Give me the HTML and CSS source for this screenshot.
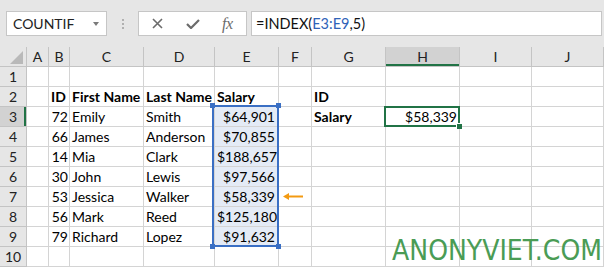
FILE: index.html
```html
<!DOCTYPE html>
<html>
<head>
<meta charset="utf-8">
<link rel="stylesheet" href="styles.css">
</head>
<body>
<div class="app">
  <div class="toolbar">
    <div class="namebox"><span>COUNTIF</span><span class="nb-caret"></span></div>
    <div class="grip"><i></i><i></i><i></i></div>
    <div class="fbtns">
      <svg class="ic-x" width="11" height="11" viewBox="0 0 11 11"><path d="M1 1L10 10M10 1L1 10" stroke="#6b6b6b" stroke-width="1.6" fill="none"/></svg>
      <svg class="ic-ok" width="14" height="10" viewBox="0 0 14 10"><path d="M1 5L5 9L13 1" stroke="#6b6b6b" stroke-width="2.2" fill="none"/></svg>
      <span class="fx">fx</span>
    </div>
    <div class="formula">=INDEX(<span class="ref">E3:E9</span>,5)</div>
  </div>
  <div class="sheet">
    <div class="c hd corner"><svg width="13" height="13" viewBox="0 0 13 13"><polygon points="13,0 13,13 0,13" fill="#b9b9b9"/></svg></div>
    <div class="c hd">A</div><div class="c hd">B</div><div class="c hd">C</div><div class="c hd">D</div><div class="c hd">E</div><div class="c hd">F</div><div class="c hd">G</div><div class="c hd hd-act">H</div><div class="c hd">I</div><div class="c hd">J</div>

    <div class="c hd rh">1</div><div class="c"></div><div class="c"></div><div class="c"></div><div class="c"></div><div class="c"></div><div class="c"></div><div class="c"></div><div class="c"></div><div class="c"></div><div class="c"></div>

    <div class="c hd rh">2</div><div class="c"></div><div class="c b idc">ID</div><div class="c b">First Name</div><div class="c b">Last Name</div><div class="c b">Salary</div><div class="c"></div><div class="c b">ID</div><div class="c"></div><div class="c"></div><div class="c"></div>

    <div class="c hd rh rh-act">3</div><div class="c"></div><div class="c r idc">72</div><div class="c">Emily</div><div class="c">Smith</div><div class="c r sel anchor">$64,901<div class="selbox"><i class="h tl"></i><i class="h tr"></i><i class="h bl"></i><i class="h br"></i></div></div><div class="c"></div><div class="c b">Salary</div><div class="c r anchor">$58,339<div class="actbox"><i class="fill"></i></div></div><div class="c"></div><div class="c"></div>

    <div class="c hd rh">4</div><div class="c"></div><div class="c r idc">66</div><div class="c">James</div><div class="c">Anderson</div><div class="c r sel">$70,855</div><div class="c"></div><div class="c"></div><div class="c"></div><div class="c"></div><div class="c"></div>

    <div class="c hd rh">5</div><div class="c"></div><div class="c r idc">14</div><div class="c">Mia</div><div class="c">Clark</div><div class="c r sel">$188,657</div><div class="c"></div><div class="c"></div><div class="c"></div><div class="c"></div><div class="c"></div>

    <div class="c hd rh">6</div><div class="c"></div><div class="c r idc">30</div><div class="c">John</div><div class="c">Lewis</div><div class="c r sel">$97,566</div><div class="c"></div><div class="c"></div><div class="c"></div><div class="c"></div><div class="c"></div>

    <div class="c hd rh">7</div><div class="c"></div><div class="c r idc">53</div><div class="c">Jessica</div><div class="c">Walker</div><div class="c r sel">$58,339</div><div class="c arrowc"><svg width="20" height="7" viewBox="0 0 20 7"><path d="M4 3.5H20" stroke="#f39a12" stroke-width="2"/><polygon points="0,3.5 6,0 6,7" fill="#f39a12"/></svg></div><div class="c"></div><div class="c"></div><div class="c"></div><div class="c"></div>

    <div class="c hd rh">8</div><div class="c"></div><div class="c r idc">56</div><div class="c">Mark</div><div class="c">Reed</div><div class="c r sel">$125,180</div><div class="c"></div><div class="c"></div><div class="c"></div><div class="c"></div><div class="c"></div>

    <div class="c hd rh">9</div><div class="c"></div><div class="c r idc">79</div><div class="c">Richard</div><div class="c">Lopez</div><div class="c r sel">$91,632</div><div class="c"></div><div class="c"></div><div class="c"></div><div class="c"></div><div class="c"></div>

    <div class="c hd rh">10</div><div class="c"></div><div class="c"></div><div class="c"></div><div class="c"></div><div class="c"></div><div class="c"></div><div class="c"></div><div class="c"></div><div class="c"></div><div class="c"></div>
  </div>
  <div class="watermark">ANONYVIET.COM</div>
</div>
</body>
</html>
```
FILE: styles.css
```css
* { box-sizing: border-box; margin: 0; padding: 0; }
html, body { width: 604px; height: 267px; overflow: hidden; }
body { background: #e6e6e6; font-family: Lato, "Open Sans", sans-serif; color: #000; }
.app { position: relative; width: 604px; height: 267px; overflow: hidden; }

.toolbar { height: 47px; display: flex; align-items: flex-start; padding: 11px 2px 0 6px; }
.namebox { width: 101px; height: 25px; background: #fff; border: 1px solid #c6c6c6; display: flex; align-items: center; justify-content: space-between; padding: 0 7px 0 6px; font-size: 14px; color: #222; }
.nb-caret { width: 0; height: 0; border-left: 3.5px solid transparent; border-right: 3.5px solid transparent; border-top: 4px solid #7a7a7a; }
.grip { display: flex; flex-direction: column; gap: 2px; margin: 8px 0 0 15px; }
.grip i { display: block; width: 2px; height: 2px; background: #b0b0b0; }
.fbtns { margin-left: 14px; width: 109px; height: 25px; background: #fff; border: 1px solid #c6c6c6; display: flex; align-items: center; padding-left: 13px; }
.ic-ok { margin-left: 23px; }
.fx { margin-left: 22px; font-family: "Liberation Serif", serif; font-style: italic; font-size: 16px; color: #6b6b6b; letter-spacing: -0.5px; }
.formula { margin-left: 4px; flex: 1; height: 25px; background: #fff; border: 1px solid #c6c6c6; font-size: 14.5px; padding-left: 4px; line-height: 23px; color: #111; }
.ref { color: #2f63b8; }

.sheet { display: grid; grid-template-columns: 27px 22px 21px 74px 71px 64px 33px 74px 74px 72px 72px; grid-auto-rows: 20px; background: #fff; }
.c { border-right: 1px solid #d4d4d4; border-bottom: 1px solid #d4d4d4; font-size: 14px; line-height: 19px; padding: 0 2px; white-space: nowrap; }
.hd { background: #e6e6e6; border-color: #c4c4c4; text-align: center; color: #222; padding-top: 1px; line-height: 18px; }
.rh { padding-top: 0; line-height: 19px; }
.corner { display: flex; align-items: flex-end; justify-content: flex-end; padding: 0 3px 2px 0; }
.hd-act { background: #d2d2d2; box-shadow: inset 0 -2px 0 #217346; }
.rh-act { background: #d2d2d2; box-shadow: inset -2px 0 0 #217346; }
.b { font-weight: 700; }
.r { text-align: right; }
.idc { padding-right: 1px; }
.sel { background: #e4ebf6; padding-right: 3px; }
.anchor { position: relative; }
.arrowc { display: flex; align-items: center; padding-left: 4px; }

.selbox { position: absolute; left: -3px; top: -2px; width: 67px; height: 142px; border: 2px solid #3a6fc4; pointer-events: none; }
.h { position: absolute; width: 5px; height: 5px; background: #3a6fc4; }
.tl { left: -4px; top: -4px; }
.tr { right: -4px; top: -4px; }
.bl { left: -4px; bottom: -4px; }
.br { right: -4px; bottom: -4px; }

.actbox { position: absolute; left: -2px; top: -1px; width: 76px; height: 21px; border: 2px solid #217346; }
.fill { position: absolute; right: -4px; bottom: -4px; width: 6px; height: 6px; background: #217346; border-left: 1px solid #fff; border-top: 1px solid #fff; }

.watermark { position: absolute; right: 2px; top: 235px; font-family: "DejaVu Sans Condensed", "DejaVu Sans", sans-serif; font-stretch: condensed; font-size: 28px; line-height: 32px; color: #4a9c55; letter-spacing: 0; white-space: nowrap; }
```
